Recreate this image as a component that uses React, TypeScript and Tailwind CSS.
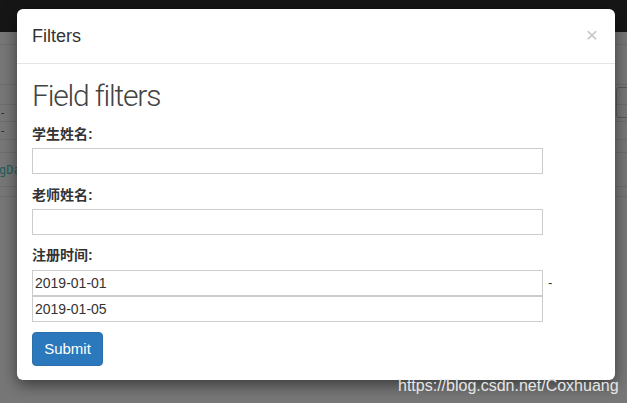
import React from "react";

export default function App() {
  const sans = { fontFamily: '"Liberation Sans", "Noto Sans CJK SC", Arial, sans-serif' };
  const cjk = { fontFamily: '"Liberation Sans", "Noto Sans CJK SC", sans-serif' };
  return (
    <div className="relative w-[627px] h-[403px] overflow-hidden bg-[#777777]" style={sans}>
      {/* background page */}
      <div className="flex flex-col w-full h-full">
        <div className="h-[32px] bg-[#161616] shrink-0" />
        <div className="h-[13px] border-b border-[#6c6c6c]" />
        <div className="h-[40px] border-b border-[#6c6c6c]" />
        <div className="h-[20px] border-b border-[#6c6c6c]" />
        <div className="h-[17px] border-b border-[#6c6c6c] flex items-center"><span className="ml-[1px] text-[10px] leading-none text-[#222]">-</span></div>
        <div className="h-[18px] border-b border-[#6c6c6c] flex items-center"><span className="ml-[1px] text-[10px] leading-none text-[#222]">-</span></div>
        <div className="h-[13px] border-b border-[#6c6c6c]" />
        <div className="h-[34px] border-b border-[#6c6c6c] flex items-center">
          <span className="ml-[-1px] text-[12px] text-[#1f5d5b]" style={{ fontFamily: '"DejaVu Sans Mono", monospace' }}>gDa</span>
        </div>
        <div className="h-[10px] border-b border-[#6c6c6c]" />
        <div className="flex-1" />
      </div>
      {/* right side button edge */}
      <div className="absolute left-[616px] top-[87px] w-[20px] h-[31px] rounded-[3px] border border-[#5a5a5a]" />

      {/* modal */}
      <div className="absolute left-[17px] top-[9px] w-[598px] bg-white rounded-[6px] shadow-[0_5px_15px_rgba(0,0,0,0.5)]">
        <div className="flex items-center justify-between h-[55px] px-[15px] border-b border-[#e5e5e5]">
          <span className="text-[18px] text-[#333]" style={sans}>Filters</span>
          <span className="text-[21px] leading-none text-[#c6c6c6] mr-[2px] mb-[4px]">×</span>
        </div>
        <div className="px-[15px] pt-[15px] pb-[14px] text-[#333]">
          <div className="text-[30px] leading-[33px] text-[#444] tracking-[-1.2px]" style={{ fontFamily: '"Roboto", "Liberation Sans", sans-serif', fontWeight: 300 }}>Field filters</div>
          <div className="mt-[13px] text-[14px] font-semibold leading-[18px]" style={cjk}>学生姓名:</div>
          <div className="mt-[5px] w-[511px] h-[26px] border border-[#cccccc]" />
          <div className="mt-[12px] text-[14px] font-semibold leading-[18px]" style={cjk}>老师姓名:</div>
          <div className="mt-[5px] w-[511px] h-[26px] border border-[#cccccc]" />
          <div className="mt-[11px] text-[14px] font-semibold leading-[18px]" style={cjk}>注册时间:</div>
          <div className="mt-[6px] flex items-center">
            <div className="w-[511px] h-[26px] border border-[#cccccc] flex items-center px-[2px] text-[14px] text-[#333]">2019-01-01</div>
            <span className="ml-[5px] text-[13px] text-[#333]">-</span>
          </div>
          <div className="w-[511px] h-[26px] border border-[#cccccc] flex items-center px-[2px] text-[14px] text-[#333]">2019-01-05</div>
          <button className="mt-[10px] w-[71px] h-[34px] rounded-[4px] bg-[#2b78bc] border border-[#2a6faa] text-white text-[15px]">Submit</button>
        </div>
      </div>

      {/* watermark */}
      <div className="absolute left-[398px] top-[376px] text-[16px] leading-[20px] text-[#e6e6e6] whitespace-nowrap" style={{ fontFamily: '"Liberation Sans", Arial, sans-serif' }}>https://blog.csdn.net/Coxhuang</div>
    </div>
  );
}
